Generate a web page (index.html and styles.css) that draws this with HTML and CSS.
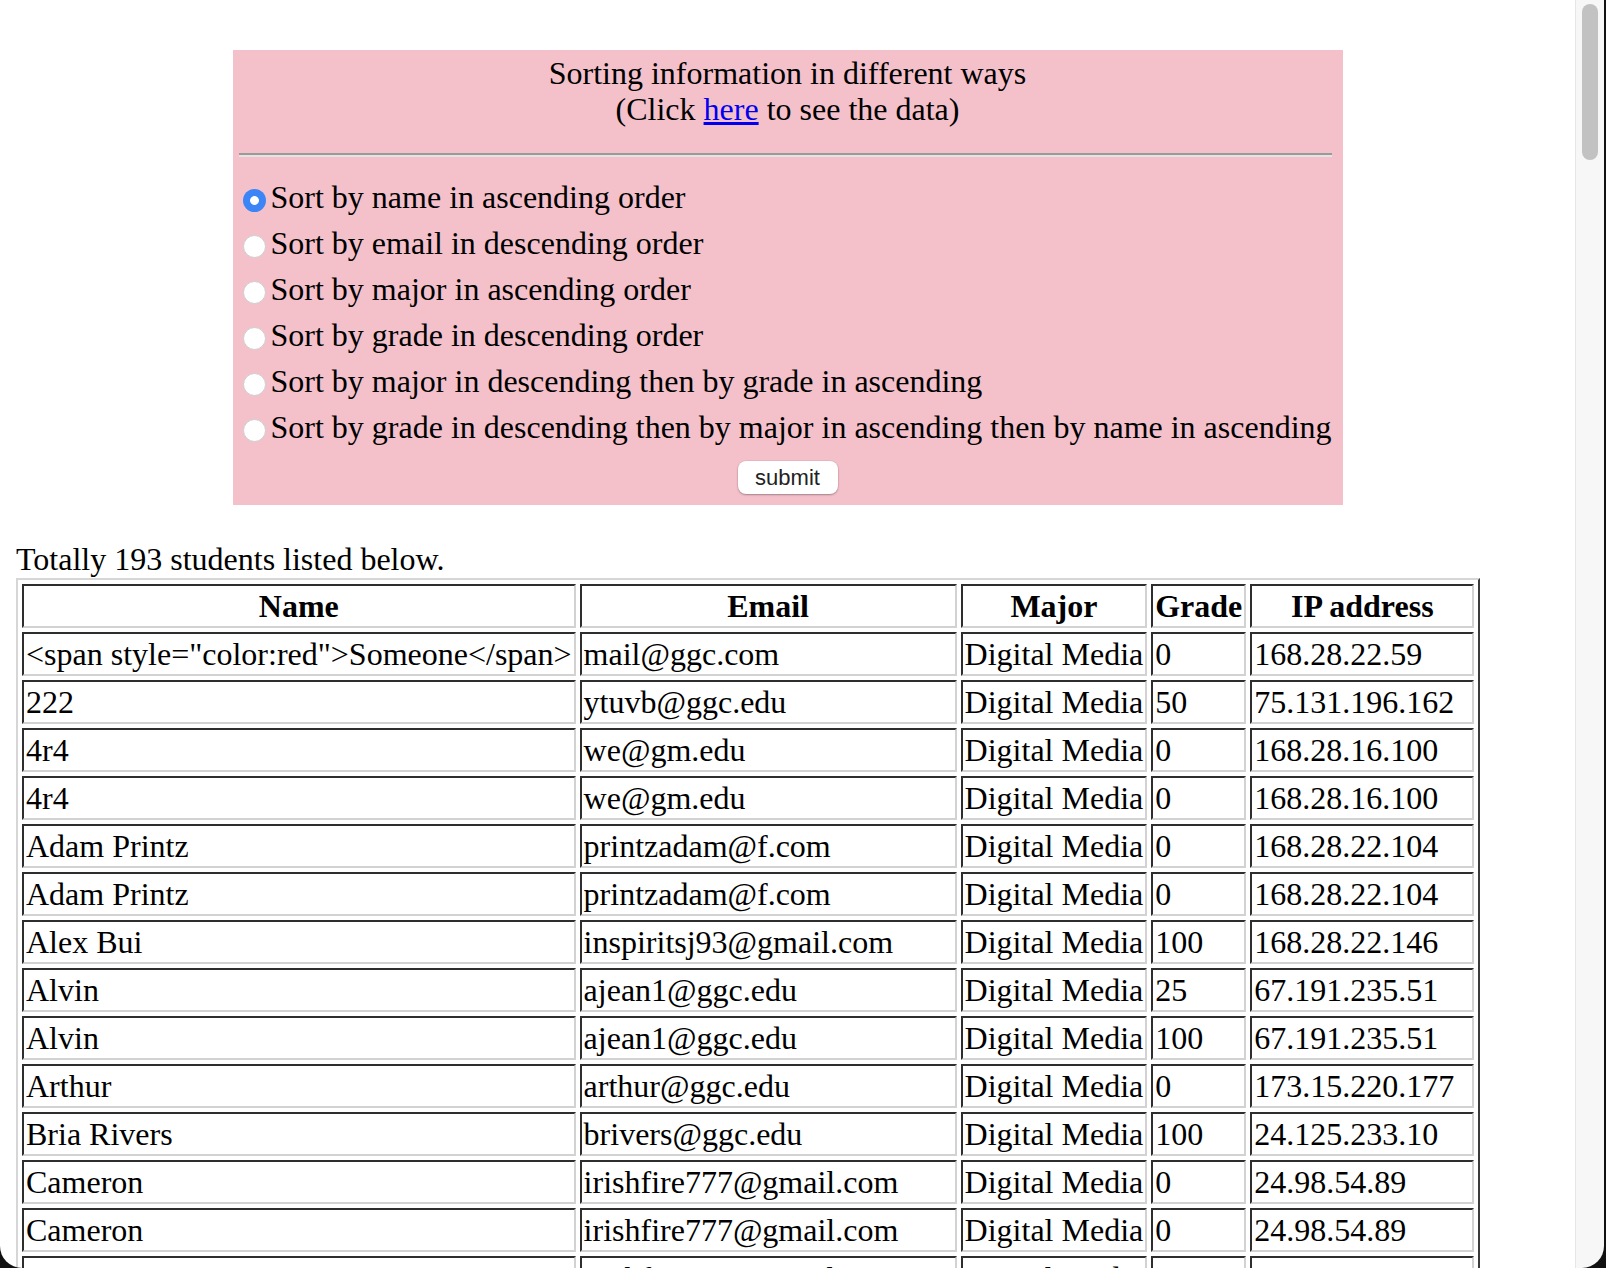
FILE: index.html
```html
<!DOCTYPE html>
<html lang="en">
<head>
<meta charset="utf-8">
<title>Sorting information in different ways</title>
<link rel="stylesheet" href="styles.css">
</head>
<body>
<div class="page">
  <form class="panel">
    <div class="title">Sorting information in different ways<br>(Click <a href="#">here</a> to see the data)</div>
    <hr class="rule">
    <div class="options">
      <label class="option"><input type="radio" class="radio" name="sort" checked>Sort by name in ascending order</label>
      <label class="option"><input type="radio" class="radio" name="sort">Sort by email in descending order</label>
      <label class="option"><input type="radio" class="radio" name="sort">Sort by major in ascending order</label>
      <label class="option"><input type="radio" class="radio" name="sort">Sort by grade in descending order</label>
      <label class="option"><input type="radio" class="radio" name="sort">Sort by major in descending then by grade in ascending</label>
      <label class="option"><input type="radio" class="radio" name="sort">Sort by grade in descending then by major in ascending then by name in ascending</label>
    </div>
    <button type="button" class="submit">submit</button>
  </form>
  <div class="count">Totally 193 students listed below.</div>
  <table class="students">
    <tr><th class="c-name">Name</th><th class="c-email">Email</th><th class="c-major">Major</th><th class="c-grade">Grade</th><th class="c-ip">IP address</th></tr>
    <tr><td>&lt;span style="color:red"&gt;Someone&lt;/span&gt;</td><td>mail@ggc.com</td><td>Digital Media</td><td>0</td><td>168.28.22.59</td></tr>
    <tr><td>222</td><td>ytuvb@ggc.edu</td><td>Digital Media</td><td>50</td><td>75.131.196.162</td></tr>
    <tr><td>4r4</td><td>we@gm.edu</td><td>Digital Media</td><td>0</td><td>168.28.16.100</td></tr>
    <tr><td>4r4</td><td>we@gm.edu</td><td>Digital Media</td><td>0</td><td>168.28.16.100</td></tr>
    <tr><td>Adam Printz</td><td>printzadam@f.com</td><td>Digital Media</td><td>0</td><td>168.28.22.104</td></tr>
    <tr><td>Adam Printz</td><td>printzadam@f.com</td><td>Digital Media</td><td>0</td><td>168.28.22.104</td></tr>
    <tr><td>Alex Bui</td><td>inspiritsj93@gmail.com</td><td>Digital Media</td><td>100</td><td>168.28.22.146</td></tr>
    <tr><td>Alvin</td><td>ajean1@ggc.edu</td><td>Digital Media</td><td>25</td><td>67.191.235.51</td></tr>
    <tr><td>Alvin</td><td>ajean1@ggc.edu</td><td>Digital Media</td><td>100</td><td>67.191.235.51</td></tr>
    <tr><td>Arthur</td><td>arthur@ggc.edu</td><td>Digital Media</td><td>0</td><td>173.15.220.177</td></tr>
    <tr><td>Bria Rivers</td><td>brivers@ggc.edu</td><td>Digital Media</td><td>100</td><td>24.125.233.10</td></tr>
    <tr><td>Cameron</td><td>irishfire777@gmail.com</td><td>Digital Media</td><td>0</td><td>24.98.54.89</td></tr>
    <tr><td>Cameron</td><td>irishfire777@gmail.com</td><td>Digital Media</td><td>0</td><td>24.98.54.89</td></tr>
    <tr><td>Cameron</td><td>irishfire777@gmail.com</td><td>Digital Media</td><td>0</td><td>24.98.54.89</td></tr>
    <tr><td>Cameron</td><td>irishfire777@gmail.com</td><td>Digital Media</td><td>0</td><td>24.98.54.89</td></tr>
  </table>
</div>
<div class="scrollbar"><div class="thumb"></div></div>
<div class="frame"></div>
</body>
</html>
```

FILE: styles.css
```css
html, body {
  margin: 0;
  height: 100%;
  overflow: hidden;
  background: #fff;
}

body {
  font-family: "Liberation Serif", "Times New Roman", serif;
  font-size: 32px;
  color: #000;
}

.page {
  width: 1575px;
  box-sizing: border-box;
  padding: 50px 16px 0;
}

.panel {
  display: block;
  width: 1110px;
  margin: 0 auto;
  background: #f4c1cb;
  padding: 5px 0 11px;
  box-sizing: border-box;
}

.title {
  text-align: center;
  line-height: 36px;
}

.title a {
  color: #0000ee;
  text-decoration: underline;
}

.rule {
  height: 0;
  border: 0;
  border-top: 2px solid #9a9a9a;
  border-bottom: 2px solid #e4e4e4;
  margin: 26px 11px 17px 6px;
}

.options {
  display: flex;
  flex-direction: column;
  padding-left: 10px;
}

.option {
  display: flex;
  align-items: center;
  gap: 5px;
  height: 46px;
  white-space: nowrap;
}

.radio {
  appearance: none;
  -webkit-appearance: none;
  margin: 6px 0 0 0;
  width: 23px;
  height: 23px;
  flex: none;
  border-radius: 50%;
  border: 1px solid #cdcdcd;
  background: #fff;
  box-sizing: border-box;
}

.radio:checked {
  border: none;
  background: radial-gradient(circle, #fff 0 4px, #3b85f7 4.8px);
}

.submit {
  display: block;
  margin: 11px auto 0;
  width: 100px;
  height: 33px;
  padding: 0;
  border: none;
  border-radius: 8px;
  background: #fff;
  box-shadow: 0 1px 2px rgba(0, 0, 0, 0.3), 0 0 0 0.5px rgba(0, 0, 0, 0.08);
  font-family: "Liberation Sans", Arial, sans-serif;
  font-size: 22px;
  color: #222;
}

.count {
  margin-top: 36px;
  line-height: 36px;
}

.students {
  margin-top: 1px;
  border-collapse: separate;
  border-spacing: 4px;
  border: 2px solid;
  border-color: #d6d6d6 #3a3a3a #3a3a3a #d6d6d6;
}

.students th,
.students td {
  border: 2px solid;
  border-color: #2e2e2e #d2d2d2 #d2d2d2 #2e2e2e;
  padding: 2px;
  line-height: 36px;
  white-space: nowrap;
  text-align: left;
}

.students th {
  text-align: center;
  font-weight: bold;
}

.c-name { width: 545px; }
.c-email { width: 369px; }
.c-major { width: 178px; }
.c-grade { width: 86px; }
.c-ip { width: 216px; }

.scrollbar {
  position: fixed;
  top: 0;
  right: 2px;
  width: 29px;
  height: 100%;
  background: #f7f7f7;
  border-left: 1px solid #e6e6e6;
  box-sizing: border-box;
}

.thumb {
  margin: 4px 0 0 6px;
  width: 16px;
  height: 156px;
  border-radius: 8px;
  background: #c2c2c2;
}

.frame {
  position: fixed;
  left: 0;
  top: 0;
  width: 1604px;
  height: 1268px;
  border-radius: 0 0 22px 22px;
  box-shadow: 0 0 0 40px #111;
  pointer-events: none;
  z-index: 10;
}
```
